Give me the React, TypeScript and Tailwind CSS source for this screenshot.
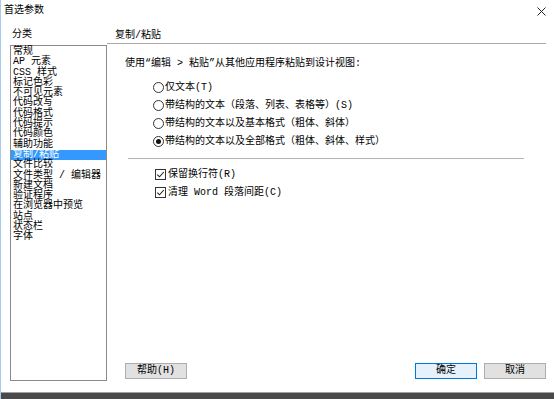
import React from 'react'

const categories = [
  '常规',
  'AP 元素',
  'CSS 样式',
  '标记色彩',
  '不可见元素',
  '代码改写',
  '代码格式',
  '代码提示',
  '代码颜色',
  '辅助功能',
  '复制/粘贴',
  '文件比较',
  '文件类型 / 编辑器',
  '新建文档',
  '验证程序',
  '在浏览器中预览',
  '站点',
  '状态栏',
  '字体',
]

const radios = [
  { label: '仅文本(T)', checked: false },
  { label: '带结构的文本（段落、列表、表格等）(S)', checked: false },
  { label: '带结构的文本以及基本格式（粗体、斜体）', checked: false },
  { label: '带结构的文本以及全部格式（粗体、斜体、样式）', checked: true },
]

const checks = ['保留换行符(R)', '清理 Word 段落间距(C)']

function Radio({ checked }: { checked: boolean }) {
  return (
    <span className="w-[11px] h-[11px] mb-[2px] rounded-full border border-[#333] bg-white flex items-center justify-center shrink-0">
      {checked && <span className="w-[5px] h-[5px] rounded-full bg-[#111]" />}
    </span>
  )
}

function Check() {
  return (
    <svg width="11" height="11" viewBox="0 0 11 11" className="shrink-0 mb-[1px]">
      <rect x="0.5" y="0.5" width="10" height="10" fill="white" stroke="#333" />
      <path d="M2.3 5.6 L4.5 7.8 L8.8 3" fill="none" stroke="#222" strokeWidth="1.1" />
    </svg>
  )
}

export default function App() {
  return (
    <div className="w-[554px] h-[399px] bg-white flex flex-col border-l border-[#a9cbeb] text-[10px] text-black font-['Liberation_Mono','Noto_Sans_CJK_SC',monospace] overflow-hidden">
      {/* title bar */}
      <div className="h-[22px] flex items-center justify-between pl-[3px] pr-[8px] shrink-0">
        <span className="leading-[12px]">首选参数</span>
        <svg width="9" height="9" viewBox="0 0 9 9">
          <path d="M0.5 0.5 L8.5 8.5 M8.5 0.5 L0.5 8.5" stroke="#222" strokeWidth="1" />
        </svg>
      </div>

      {/* body */}
      <div className="h-[359px] flex pl-[9px] pr-[8px]">
        {/* category list */}
        <div className="w-[97px] flex flex-col">
          <div className="pt-[7px] pl-[2px] leading-[12px]">分类</div>
          <div className="mt-[4px] flex-1 border border-[#8a8a8a] bg-white pt-[1px]">
            {categories.map((c, i) => (
              <div
                key={c}
                className={
                  i === 10
                    ? 'h-[10.3px] leading-[10.3px] pl-[2px] whitespace-pre bg-[#3399ff] text-white'
                    : 'h-[10.3px] leading-[10.3px] pl-[2px] whitespace-pre'
                }
              >
                {c}
              </div>
            ))}
          </div>
        </div>

        {/* settings panel */}
        <div className="flex-1 flex flex-col">
          <div className="pt-[8px] pb-[1px] pl-[8px] leading-[12px] border-b border-[#a8a8a8]">复制/粘贴</div>

          <div className="mt-[14px] pl-[18px] leading-[12px]">{'使用“编辑 > 粘贴”从其他应用程序粘贴到设计视图:'}</div>

          <div className="mt-[9px] pl-[46px]">
            {radios.map((r) => (
              <div key={r.label} className="h-[18px] flex items-center gap-[1px]">
                <Radio checked={r.checked} />
                <span className="leading-[12px]">{r.label}</span>
              </div>
            ))}
          </div>

          <div className="mt-[7px] ml-[21px] w-[396px] h-[1px] bg-[#b4b4b4]" />

          <div className="mt-[7px] pl-[48px]">
            {checks.map((c) => (
              <div key={c} className="h-[18px] flex items-center gap-[2px]">
                <Check />
                <span className="leading-[12px] whitespace-pre">{c}</span>
              </div>
            ))}
          </div>

          {/* buttons */}
          <div className="mt-auto mb-[2px] pl-[18px] flex items-center">
            <button className="w-[62px] h-[16px] bg-[#e1e1e1] border border-[#adadad] leading-[12px] flex items-center justify-center">
              帮助(H)
            </button>
            <div className="flex-1" />
            <button className="w-[62px] h-[16px] bg-[#e5f1fb] border border-[#0078d7] leading-[12px] flex items-center justify-center">
              确定
            </button>
            <button className="ml-[7px] w-[62px] h-[16px] bg-[#e1e1e1] border border-[#adadad] leading-[12px] flex items-center justify-center">
              取消
            </button>
          </div>
        </div>
      </div>

      <div className="h-[11px] shrink-0" />
      <div className="h-[7px] shrink-0 bg-[#4a4a4a] border-t border-[#a0a0a0]" />
    </div>
  )
}
